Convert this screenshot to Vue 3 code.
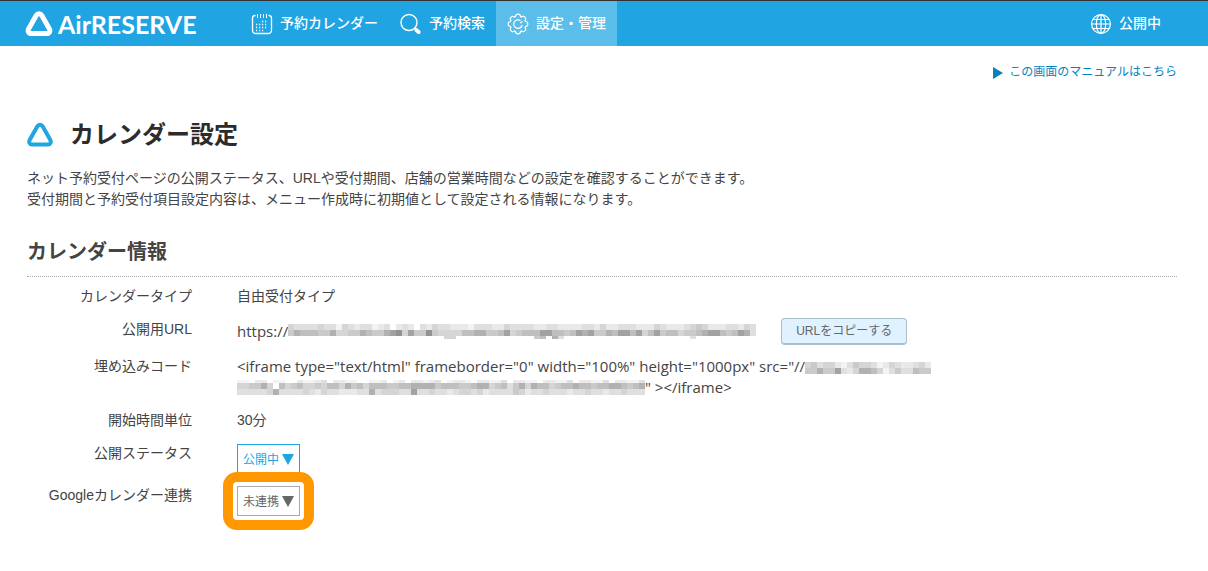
<script setup>
const shades = ['#ffffff', '#f3f3f3', '#e9e9e9', '#dfdfdf', '#d5d5d5', '#cacaca', '#bfbfbf', '#b1b1b1', '#a2a2a2', '#929292']

function mosaic(rows, heights) {
  let y = 0
  const tiles = []
  rows.forEach((row, r) => {
    ;[...row].forEach((level, i) => {
      tiles.push({ x: i * 6, y, h: heights[r], fill: shades[Number(level)] })
    })
    y += heights[r]
  })
  return { tiles, width: rows[0].length * 6, height: y }
}

const masks = {
  url: mosaic([
    '433334331432331230232032433222133322433332233222233242233322243222345422233243',
    '576665574455765578948559544446677556845666886656878557688684685664556788656873',
    '000000000000000000000000004400000000000005607300000000000000000000030000000000'
  ], [6, 6, 3]),
  host: mosaic(['453442135443124322342', '557558324776413533655'], [6, 6]),
  path: mosaic([
    '11022011002112302211001120120221230122102211302211022113022113022113',
    '44557406456445466475646665566777756665567745635747664566766566776567',
    '33333473333432433222337344433833433234434233335423343332334332334333'
  ], [3, 6, 6])
}
const codeStart = '<iframe type="text/html" frameborder="0" width="100%" height="1000px" src="//'
const codeEnd = '" ></iframe>'
</script>

<template>
  <div class="page">
    <header class="header">
      <a class="brand" href="#" aria-label="AirRESERVE">
        <svg width="28" height="26" viewBox="0 0 28 26" fill="none" aria-hidden="true">
          <path d="M11.3 4.3a3.1 3.1 0 0 1 5.4 0l7.6 13.5c1.3 2.4.1 4.7-2.4 4.7H6.1c-2.5 0-3.7-2.3-2.4-4.7Z" stroke="currentColor" stroke-width="5" stroke-linejoin="round" />
        </svg>
        <span>AirRESERVE</span>
      </a>
      <nav class="nav">
        <a href="#">
          <svg width="22" height="22" viewBox="0 0 22 22" fill="none" stroke="currentColor" aria-hidden="true">
            <path d="M4.5 2.5H4Q1.5 2.5 1.5 5V17Q1.5 20.5 5 20.5H17Q20.5 20.5 20.5 17V5Q20.5 2.5 18 2.5H17.5" stroke-width="1.3" />
            <path d="M6.5 1v4M9.5 1v4M12.5 1v4M15.5 1v4" stroke-width="1" />
            <path d="M11 8.5h6M5 11.5h12M5 14.5h12M5 17.5h9" stroke-width="1.3" stroke-dasharray="1.2 1.8" />
          </svg>
          予約カレンダー
        </a>
        <a href="#">
          <svg width="22" height="22" viewBox="1 0 22 22" fill="none" stroke="currentColor" aria-hidden="true">
            <circle cx="10" cy="9.5" r="8" stroke-width="1.4" />
            <path d="m15.500 15 2 2" stroke-width="1.4" />
            <path d="m17.500 17.200 2.200 1.800" stroke-width="4" stroke-linecap="round" />
          </svg>
          予約検索
        </a>
        <a class="active" href="#" aria-current="page">
          <svg width="22" height="22" viewBox="0 0 22 22" fill="none" stroke="currentColor" stroke-width="1.2" aria-hidden="true">
            <path d="M8.5 3.5Q8.5 1.2 11 1.2t2.5 2.3l1.1.5q1.8-1.6 3.3.1t.1 3.3l.5 1.1q2.3 0 2.3 2.5t-2.3 2.5l-.5 1.1q1.6 1.8-.1 3.3t-3.3.1l-1.1.5q0 2.3-2.5 2.3t-2.5-2.3L7.4 18q-1.8 1.6-3.3-.1t-.1-3.3l-.5-1.1Q1.2 13.5 1.2 11t2.3-2.5L4 7.4Q2.4 5.6 4.1 4.1T7.4 4Z" />
            <path d="M13.5 7.6A4.3 4.3 0 1 0 15.2 12M13 10l2.5-1.5" />
          </svg>
          設定・管理
        </a>
      </nav>
      <a class="public" href="#">
        <svg width="22" height="22" viewBox="0 0 22 22" fill="none" stroke="currentColor" stroke-width="1.2" aria-hidden="true">
          <circle cx="11" cy="11" r="9.4" />
          <ellipse cx="11" cy="11" rx="4.7" ry="9.4" />
          <path d="M11 1.5v19M1.5 11h19M3 6.5h16M3 15.5h16" />
        </svg>
        公開中
      </a>
    </header>

    <main class="main">
      <a class="manual" href="#">
        <svg width="10" height="12" viewBox="0 0 10 12" fill="currentColor" aria-hidden="true"><path d="M0 0 10 6 0 12Z" /></svg>
        この画面のマニュアルはこちら
      </a>
      <h1>
        <svg width="26" height="26" viewBox="1 0 26 26" fill="none" aria-hidden="true">
          <path d="M11.4 4.3a3 3 0 0 1 5.2 0l7.6 13.5c1.3 2.4.1 4.7-2.4 4.7H6.2c-2.5 0-3.7-2.3-2.4-4.7Z" stroke="currentColor" stroke-width="4" stroke-linejoin="round" />
        </svg>
        カレンダー設定
      </h1>
      <p class="lead">
        ネット予約受付ページの公開ステータス、URLや受付期間、店舗の営業時間などの設定を確認することができます。<br>
        受付期間と予約受付項目設定内容は、メニュー作成時に初期値として設定される情報になります。
      </p>
      <h2>カレンダー情報</h2>
      <dl class="info">
        <dt>カレンダータイプ</dt>
        <dd>自由受付タイプ</dd>
        <dt>公開用URL</dt>
        <dd class="url">
          <span class="latin">https://</span><svg class="mask" :width="masks.url.width" :height="masks.url.height" shape-rendering="crispEdges" aria-hidden="true">
            <rect v-for="(t, i) in masks.url.tiles" :key="i" :x="t.x" :y="t.y" width="6" :height="t.h" :fill="t.fill" />
          </svg>
          <button class="copy" type="button">URLをコピーする</button>
        </dd>
        <dt>埋め込みコード</dt>
        <dd class="latin">{{ codeStart }}<svg class="mask" :width="masks.host.width" :height="masks.host.height" shape-rendering="crispEdges" aria-hidden="true">
            <rect v-for="(t, i) in masks.host.tiles" :key="i" :x="t.x" :y="t.y" width="6" :height="t.h" :fill="t.fill" />
          </svg><br><svg class="mask" :width="masks.path.width" :height="masks.path.height" shape-rendering="crispEdges" aria-hidden="true">
            <rect v-for="(t, i) in masks.path.tiles" :key="i" :x="t.x" :y="t.y" width="6" :height="t.h" :fill="t.fill" />
          </svg>{{ codeEnd }}</dd>
        <dt>開始時間単位</dt>
        <dd>30分</dd>
        <dt><label for="status">公開ステータス</label></dt>
        <dd>
          <span class="picker open">
            <select id="status"><option>公開中</option><option>非公開</option></select>
            <svg width="12" height="11" viewBox="0 0 12 11" fill="currentColor" aria-hidden="true"><path d="M0 0H12L6 11Z" /></svg>
          </span>
        </dd>
        <dt><label for="google">Googleカレンダー連携</label></dt>
        <dd>
          <span class="picker highlighted">
            <select id="google"><option>未連携</option><option>連携中</option></select>
            <svg width="12" height="11" viewBox="0 0 12 11" fill="currentColor" aria-hidden="true"><path d="M0 0H12L6 11Z" /></svg>
          </span>
        </dd>
      </dl>
    </main>
  </div>
</template>

<style>
body {
  background: #fff;
}
</style>

<style scoped>
.page {
  color: #444;
  font: 14px/21px "Liberation Sans", "Noto Sans CJK JP", sans-serif;
}
a {
  color: inherit;
  text-decoration: none;
}
.header {
  display: flex;
  box-sizing: border-box;
  height: 46px;
  padding: 0 47px 0 25px;
  border-top: 1px solid #333;
  background: #20a4e2;
  color: #fff;
}
.brand {
  display: flex;
  align-items: center;
  gap: 5px;
  width: 215px;
  font: bold 25px/30px Lato, sans-serif;
}
.nav {
  display: flex;
}
.nav a,
.public {
  display: flex;
  align-items: center;
  gap: 7px;
  padding: 0 11px;
  font-weight: 500;
}
.nav a.active {
  background: #5abdea;
}
.header .public {
  padding: 0;
  margin-left: auto;
}
.main {
  display: flex;
  flex-direction: column;
  padding: 16px 31px 40px 27px;
}
.manual {
  display: flex;
  align-self: flex-end;
  align-items: center;
  gap: 6px;
  color: #0782bd;
  font-size: 12px;
}
h1 {
  display: flex;
  align-items: center;
  gap: 17px;
  margin: 34px 0 15px;
  color: #2c2c2c;
  font-size: 24px;
  line-height: 36px;
}
h1 svg {
  color: #20a4e2;
}
.lead {
  margin: 0;
}
h2 {
  margin: 27px 0 9px;
  padding-bottom: 9px;
  border-bottom: 1px dotted #aaa;
  font-size: 20px;
  line-height: 30px;
}
.info {
  display: grid;
  grid-template-columns: 165px 1fr;
  gap: 12px 45px;
  margin: 0;
}
dt {
  text-align: right;
}
dd {
  margin: 0;
}
.latin {
  font-family: "Open Sans", sans-serif;
  font-size: 15px;
}
.url {
  display: flex;
  align-items: center;
  height: 25px;
}
.mask {
  vertical-align: -2px;
}
.copy {
  height: 27px;
  margin-left: 25px;
  padding: 0 14px;
  border: 1px solid #a9bfcc;
  border-bottom-width: 2px;
  border-radius: 4px;
  background: #e0f2ff;
  color: #666;
  font: 12px/20px "Liberation Sans", "Noto Sans CJK JP", sans-serif;
}
.picker {
  position: relative;
  display: flex;
  width: 63px;
  height: 30px;
  margin: 1px 0 -1px;
  color: #666;
}
.picker select {
  appearance: none;
  width: 100%;
  padding: 2px 5px 0;
  border: 1px solid #aaa;
  border-radius: 0;
  background: #fff;
  color: inherit;
  font: 12px/18px "Liberation Sans", "Noto Sans CJK JP", sans-serif;
}
.picker svg {
  position: absolute;
  top: 10px;
  right: 6px;
  pointer-events: none;
}
.picker.open {
  color: #20a4e2;
}
.picker.open select {
  border-color: #20a4e2;
}
.picker.highlighted::after {
  content: "";
  position: absolute;
  inset: -14px;
  border: 10px solid #ff9800;
  border-radius: 14px;
  pointer-events: none;
}
</style>
